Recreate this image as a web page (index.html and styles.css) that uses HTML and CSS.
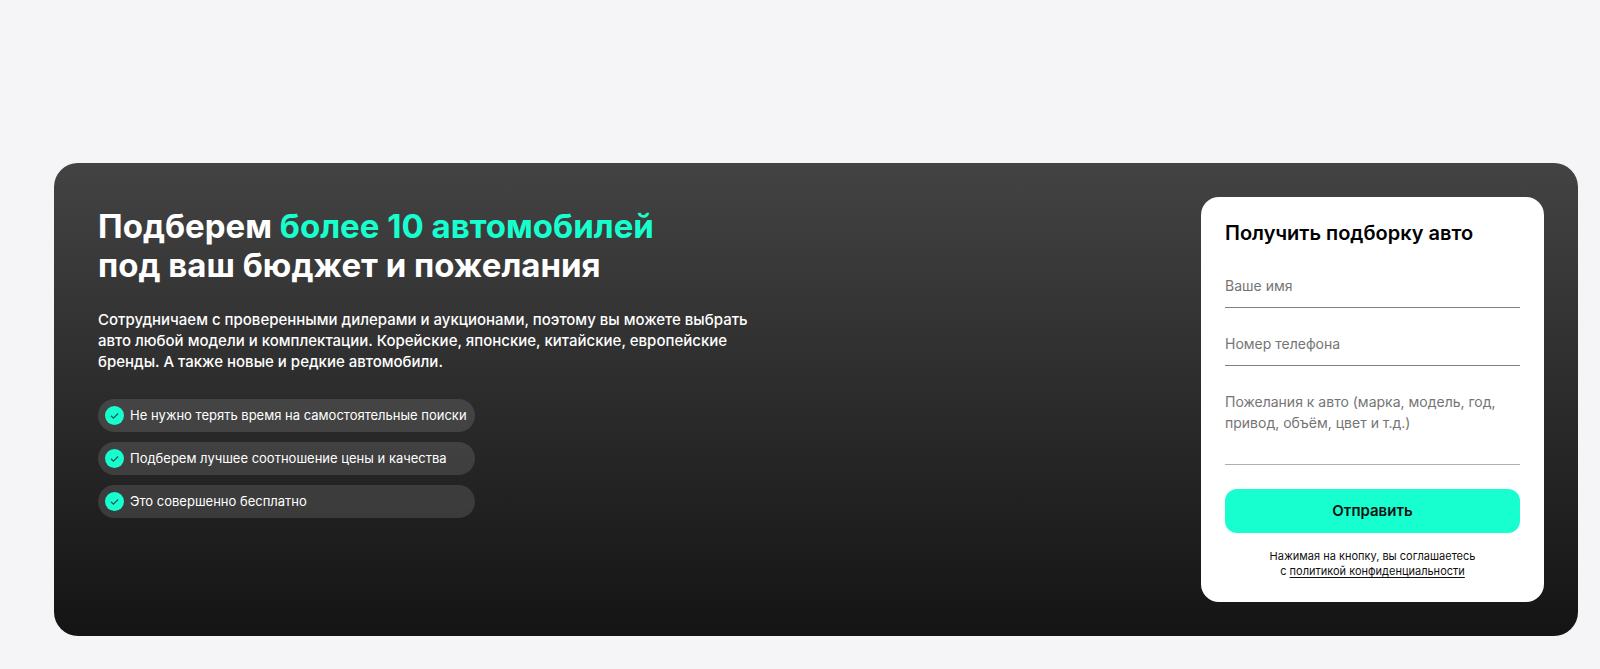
FILE: index.html
```html
<!DOCTYPE html>
<html lang="ru">
<head>
<meta charset="utf-8">
<meta name="viewport" content="width=device-width, initial-scale=1">
<title>Подбор автомобилей</title>
<link rel="stylesheet" href="styles.css">
</head>
<body>
<main class="page">
  <section class="promo">
    <div class="promo-info">
      <h1 class="promo-title">Подберем <span class="accent">более 10 автомобилей</span><br>под ваш бюджет и пожелания</h1>
      <p class="promo-text">Сотрудничаем с проверенными дилерами и аукционами, поэтому вы можете выбрать<br>авто любой модели и комплектации. Корейские, японские, китайские, европейские<br>бренды. А также новые и редкие автомобили.</p>
      <ul class="benefits">
        <li class="benefit">
          <svg class="check" viewBox="0 0 19 19" aria-hidden="true"><circle cx="9.5" cy="9.5" r="9.5" fill="#17ffcf"/><path d="M6 9.8l2.4 2.3 4.8-4.6" fill="none" stroke="#24584d" stroke-width="1.3"/></svg>
          <span>Не нужно терять время на самостоятельные поиски</span>
        </li>
        <li class="benefit">
          <svg class="check" viewBox="0 0 19 19" aria-hidden="true"><circle cx="9.5" cy="9.5" r="9.5" fill="#17ffcf"/><path d="M6 9.8l2.4 2.3 4.8-4.6" fill="none" stroke="#24584d" stroke-width="1.3"/></svg>
          <span>Подберем лучшее соотношение цены и качества</span>
        </li>
        <li class="benefit">
          <svg class="check" viewBox="0 0 19 19" aria-hidden="true"><circle cx="9.5" cy="9.5" r="9.5" fill="#17ffcf"/><path d="M6 9.8l2.4 2.3 4.8-4.6" fill="none" stroke="#24584d" stroke-width="1.3"/></svg>
          <span>Это совершенно бесплатно</span>
        </li>
      </ul>
    </div>
    <form class="card">
      <h2 class="card-title">Получить подборку авто</h2>
      <input class="field" type="text" name="name" placeholder="Ваше имя" aria-label="Ваше имя">
      <input class="field" type="tel" name="phone" placeholder="Номер телефона" aria-label="Номер телефона">
      <textarea class="field field-area" name="wishes" placeholder="Пожелания к авто (марка, модель, год, привод, объём, цвет и т.д.)" aria-label="Пожелания к авто"></textarea>
      <button class="submit" type="submit">Отправить</button>
      <p class="note">Нажимая на кнопку, вы соглашаетесь<br>с <a class="note-link" href="#privacy">политикой конфиденциальности</a></p>
    </form>
  </section>
</main>
</body>
</html>
```
FILE: styles.css
```css
* {
  box-sizing: border-box;
  margin: 0;
}

body {
  background: #f5f5f8;
  font-family: Inter, "Noto Sans", sans-serif;
  color: #101010;
}

.page {
  padding: 163px 22px 32px 54px;
}

.promo {
  display: flex;
  justify-content: space-between;
  align-items: flex-start;
  gap: 40px;
  padding: 34px 34px 34px 44px;
  border-radius: 24px;
  background: linear-gradient(#434343, #141414);
}

.promo-info {
  padding-top: 10px;
  color: #fff;
}

.promo-title {
  font-size: 33px;
  line-height: 39px;
  font-weight: 700;
}

.accent {
  color: #17ffcf;
}

.promo-text {
  margin-top: 24px;
  font-size: 15px;
  line-height: 21px;
  font-weight: 500;
}

.benefits {
  display: grid;
  width: max-content;
  gap: 10px;
  margin-top: 27px;
  padding: 0;
  list-style: none;
}

.benefit {
  display: flex;
  align-items: center;
  gap: 6px;
  height: 33px;
  padding: 0 8px 0 7px;
  border-radius: 17px;
  background: rgba(255, 255, 255, 0.12);
  font-size: 13px;
  line-height: 18px;
}

.benefit span {
  padding-bottom: 2px;
}

.check {
  width: 19px;
  height: 19px;
}

.card {
  display: flex;
  flex-direction: column;
  flex: 0 0 343px;
  padding: 24px 24px 23px;
  border-radius: 18px;
  background: #fff;
}

.card-title {
  margin-bottom: 21px;
  font-size: 20px;
  line-height: 24px;
  font-weight: 600;
  color: #000;
}

.field {
  width: 100%;
  height: 42px;
  margin-bottom: 16px;
  padding: 0 0 2px;
  border: 0;
  border-bottom: 1px solid #808080;
  border-radius: 0;
  background: none;
  font: 14px/21px Inter, "Noto Sans", sans-serif;
  color: #101010;
}

.field::placeholder {
  color: #757575;
  opacity: 1;
}

.field-area {
  height: 83px;
  margin-bottom: 24px;
  padding-top: 9px;
  border-bottom-color: #b0b0b0;
  resize: none;
  overflow: hidden;
}

.submit {
  height: 44px;
  border: 0;
  border-radius: 12px;
  background: #17ffcf;
  font: 600 15px/20px Inter, "Noto Sans", sans-serif;
  color: #101010;
}

.note {
  margin-top: 16px;
  font-size: 11px;
  line-height: 15px;
  text-align: center;
}

.note-link {
  color: inherit;
  text-underline-offset: 2px;
}
```
